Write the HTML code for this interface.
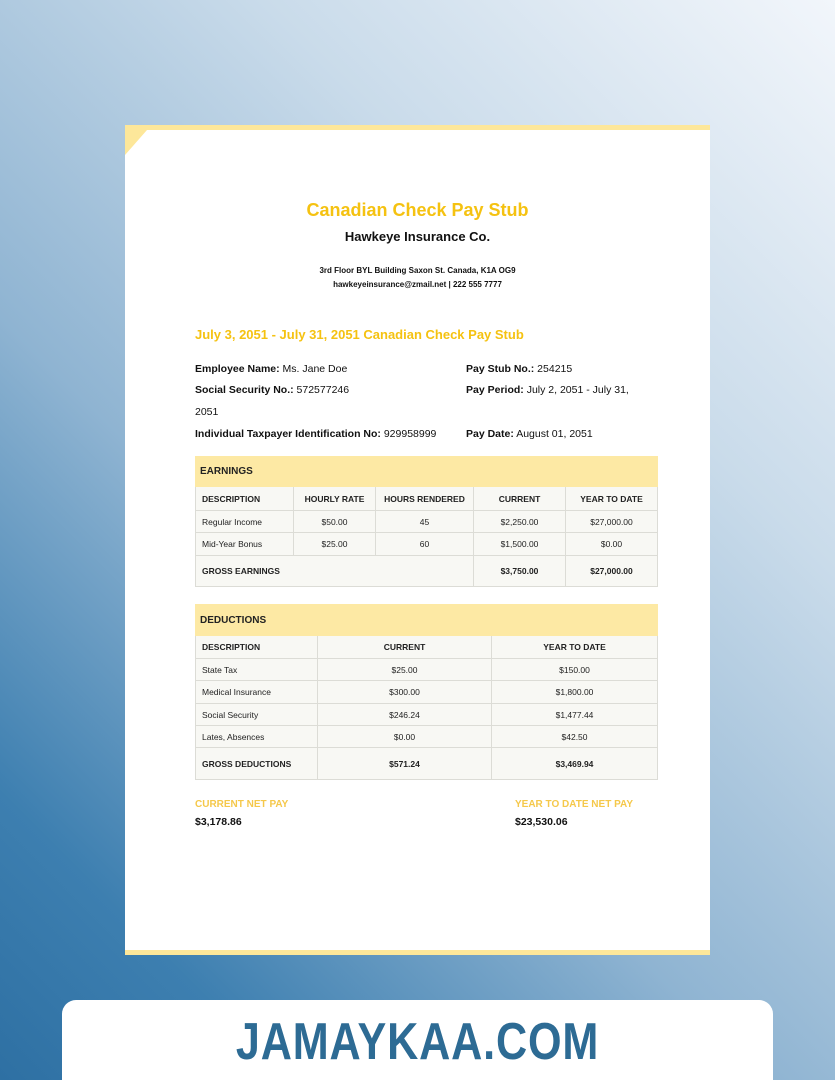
<!DOCTYPE html>
<html><head><meta charset="utf-8"><style>
*{margin:0;padding:0;box-sizing:border-box}
html,body{width:835px;height:1080px;overflow:hidden}
body{position:relative;font-family:"Liberation Sans",sans-serif;background:linear-gradient(225deg,#f2f6fb 0%,#c9dbea 30%,#8fb4d2 60%,#3d7fb0 85%,#2e70a3 100%)}
.a{position:absolute;white-space:nowrap}
.page{position:absolute;left:125px;top:125px;width:585px;height:830px;background:#fff;border-top:5px solid #fde79a;border-bottom:5px solid #fde79a}
.tri{position:absolute;left:0;top:0;width:0;height:0;border-top:25px solid #fde79a;border-right:22px solid transparent}
table{position:absolute;left:195px;width:462px;border-collapse:collapse;table-layout:fixed;font-size:8.5px;color:#222}
td{border:1px solid #dcdcd6;background:#f8f8f4;padding:0 4px;text-align:center;white-space:nowrap}
td.l{text-align:left;padding-left:6px}
tr.h td{background:#fde9a4;font-weight:bold;font-size:10px;text-align:left;border-color:#fde9a4}
tr.b td{font-weight:bold}
.info{font-size:10.5px;color:#111}
.info b{font-weight:bold}
</style></head><body>
<div class="page"><div class="tri"></div></div>
<div class="a" style="left:0;width:835px;text-align:center;top:200px;font-size:18px;font-weight:bold;color:#f5c211">Canadian Check Pay Stub</div>
<div class="a" style="left:0;width:835px;text-align:center;top:229px;font-size:13px;font-weight:bold;color:#111">Hawkeye Insurance Co.</div>
<div class="a" style="left:0;width:835px;text-align:center;top:266px;font-size:8px;font-weight:bold;color:#111">3rd Floor BYL Building Saxon St. Canada, K1A OG9</div>
<div class="a" style="left:0;width:835px;text-align:center;top:280px;font-size:8px;font-weight:bold;color:#111">hawkeyeinsurance@zmail.net | 222 555 7777</div>
<div class="a" style="left:195px;top:327px;font-size:13px;font-weight:bold;color:#f5c211">July 3, 2051 - July 31, 2051 Canadian Check Pay Stub</div>
<div class="a info" style="left:195px;top:363px"><b>Employee Name:</b> Ms. Jane Doe</div>
<div class="a info" style="left:195px;top:384px"><b>Social Security No.:</b> 572577246</div>
<div class="a info" style="left:195px;top:406px">2051</div>
<div class="a info" style="left:195px;top:428px"><b>Individual Taxpayer Identification No:</b> 929958999</div>
<div class="a info" style="left:466px;top:363px"><b>Pay Stub No.:</b> 254215</div>
<div class="a info" style="left:466px;top:384px"><b>Pay Period:</b> July 2, 2051 - July 31,</div>
<div class="a info" style="left:466px;top:428px"><b>Pay Date:</b> August 01, 2051</div>

<table style="top:456px">
<colgroup><col style="width:98px"><col style="width:82px"><col style="width:98px"><col style="width:92px"><col style="width:92px"></colgroup>
<tr class="h" style="height:30px"><td colspan="5">EARNINGS</td></tr>
<tr class="b" style="height:24px"><td class="l">DESCRIPTION</td><td>HOURLY RATE</td><td>HOURS RENDERED</td><td>CURRENT</td><td>YEAR TO DATE</td></tr>
<tr style="height:22px"><td class="l">Regular Income</td><td>$50.00</td><td>45</td><td>$2,250.00</td><td>$27,000.00</td></tr>
<tr style="height:23px"><td class="l">Mid-Year Bonus</td><td>$25.00</td><td>60</td><td>$1,500.00</td><td>$0.00</td></tr>
<tr class="b" style="height:31px"><td class="l" colspan="3">GROSS EARNINGS</td><td>$3,750.00</td><td>$27,000.00</td></tr>
</table>

<table style="top:604px">
<colgroup><col style="width:122px"><col style="width:174px"><col style="width:166px"></colgroup>
<tr class="h" style="height:31px"><td colspan="3">DEDUCTIONS</td></tr>
<tr class="b" style="height:23px"><td class="l">DESCRIPTION</td><td>CURRENT</td><td>YEAR TO DATE</td></tr>
<tr style="height:22px"><td class="l">State Tax</td><td>$25.00</td><td>$150.00</td></tr>
<tr style="height:23px"><td class="l">Medical Insurance</td><td>$300.00</td><td>$1,800.00</td></tr>
<tr style="height:22px"><td class="l">Social Security</td><td>$246.24</td><td>$1,477.44</td></tr>
<tr style="height:22px"><td class="l">Lates, Absences</td><td>$0.00</td><td>$42.50</td></tr>
<tr class="b" style="height:32px"><td class="l">GROSS DEDUCTIONS</td><td>$571.24</td><td>$3,469.94</td></tr>
</table>

<div class="a" style="left:195px;top:799px;font-size:10px;font-weight:bold;color:#f5c84a">CURRENT NET PAY</div>
<div class="a" style="left:195px;top:816px;font-size:10.5px;font-weight:bold;color:#111">$3,178.86</div>
<div class="a" style="left:515px;top:799px;font-size:10px;font-weight:bold;color:#f5c84a">YEAR TO DATE NET PAY</div>
<div class="a" style="left:515px;top:816px;font-size:10.5px;font-weight:bold;color:#111">$23,530.06</div>

<div class="a" style="left:62px;top:1000px;width:711px;height:80px;background:#fff;border-radius:14px 14px 0 0"></div>
<div class="a" style="left:0;width:835px;text-align:center;top:1012px;font-size:52px;font-weight:bold;color:#2d6b94;transform:scaleX(0.83);letter-spacing:1px">JAMAYKAA.COM</div>
</body></html>
